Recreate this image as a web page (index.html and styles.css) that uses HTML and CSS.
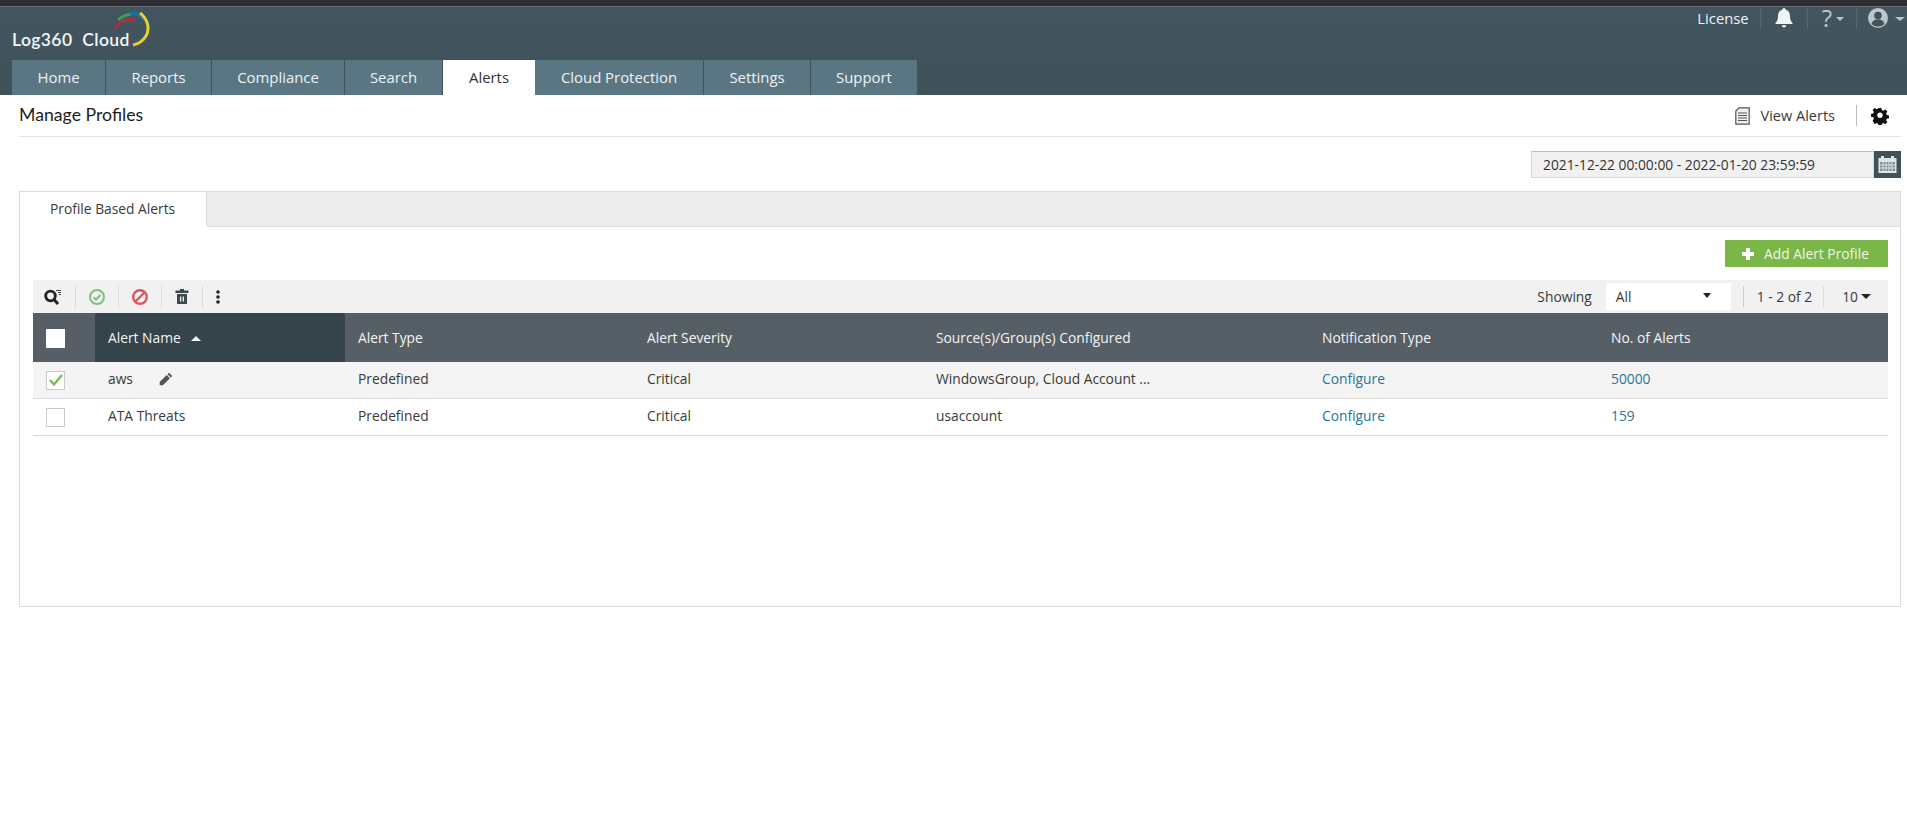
FILE: index.html
```html
<!DOCTYPE html>
<html lang="en">
<head>
<meta charset="utf-8">
<title>Manage Profiles</title>
<link rel="stylesheet" href="styles.css">
</head>
<body>
<div class="topstrip"></div>
<header class="header">
  <div class="brandrow">
    <div class="logo">
      <span class="logo-text">Log360 Cloud</span>
      <svg class="logo-arc" width="40" height="40" viewBox="0 0 40 40" fill="none">
        <path d="M3 17C6 10 14 6 24 8" stroke="#a8323f" stroke-width="3"/>
        <path d="M6 8C9 5 14 3 19 2" stroke="#3f9a55" stroke-width="3"/>
        <path d="M18 2C23 0 28 2 32 8" stroke="#1f6f9c" stroke-width="4"/>
        <path d="M28 1C36 7 38 17 34 24C31 29 26 32 21 33" stroke="#e6cf2e" stroke-width="3"/>
      </svg>
    </div>
    <div class="utils">
      <span class="license">License</span>
      <span class="usep"></span>
      <svg class="u-bell" width="18" height="20" viewBox="0 0 18 20"><path fill="#f1f4f5" d="M9 0a1.6 1.6 0 0 1 1.6 1.7C13.6 2.4 15 5 15 8c0 3.5.9 5.500 2.500 7v1H.5v-1C2.100 13.500 3 11.500 3 8c0-3 1.400-5.600 4.400-6.300A1.600 1.600 0 0 1 9 0zM6.800 17.200h4.400A2.200 2.200 0 0 1 9 19.400a2.200 2.200 0 0 1-2.200-2.200z"/></svg>
      <span class="usep"></span>
      <span class="help">?</span><span class="caret caret-light"></span>
      <span class="usep"></span>
      <svg class="u-user" width="20" height="20" viewBox="0 0 20 20"><circle cx="10" cy="10" r="10" fill="#bcc5c9"/><circle cx="10" cy="7.500" r="3.800" fill="#3f525a"/><path fill="#3f525a" d="M3.500 16c.8-3.200 3.300-4.700 6.500-4.700s5.700 1.500 6.500 4.700A9 9 0 0 1 10 18.500 9 9 0 0 1 3.500 16z"/></svg>
      <span class="caret caret-light caret-end"></span>
    </div>
  </div>
  <nav class="nav">
    <a class="nav-tab t1">Home</a>
    <a class="nav-tab t2">Reports</a>
    <a class="nav-tab t3">Compliance</a>
    <a class="nav-tab t4">Search</a>
    <a class="nav-tab t5 active">Alerts</a>
    <a class="nav-tab t6">Cloud Protection</a>
    <a class="nav-tab t7">Settings</a>
    <a class="nav-tab t8">Support</a>
  </nav>
</header>

<main class="main">
  <div class="titlebar">
    <h1 class="title">Manage Profiles</h1>
    <div class="title-actions">
      <svg width="15" height="18" viewBox="0 0 15 18"><path fill="#f0f0f0" stroke="#555" stroke-width="1.200" d="M4 .8h10.200v16.400H.8V4z"/><path stroke="#555" stroke-width="1.200" d="M3 6h9M3 8.500h9M3 11h9M3 13.500h9"/></svg>
      <span class="view-alerts">View Alerts</span>
      <span class="tsep"></span>
      <svg width="18" height="18" viewBox="0 0 18 18"><path fill="#111" d="M7.400 0h3.200l.5 2.500 1.600.7 2.200-1.400 2.300 2.300-1.400 2.200.7 1.600 2.500.5v3.200l-2.500.5-.7 1.600 1.400 2.200-2.300 2.300-2.200-1.400-1.600.7-.5 2.500H7.400l-.5-2.500-1.600-.7-2.200 1.400L.8 14.200l1.400-2.200-.7-1.600L-1 9.900V6.700l2.500-.5.700-1.600L.8 2.400 3.100.1l2.200 1.400 1.600-.7z" transform="translate(.9 .9) scale(.9)"/><circle cx="9" cy="8.200" r="2.700" fill="#fff"/></svg>
    </div>
  </div>

  <div class="daterow">
    <div class="datebox">2021-12-22 00:00:00 - 2022-01-20 23:59:59</div>
    <div class="calbtn">
      <svg width="19" height="17" viewBox="0 0 19 17"><rect x=".5" y="2" width="18" height="15" fill="#dfe4e6"/><rect x="3" y="0" width="3" height="4" fill="#dfe4e6"/><rect x="13" y="0" width="3" height="4" fill="#dfe4e6"/><rect x="2" y="6" width="15" height="9" fill="#7d8b92"/><path stroke="#dfe4e6" d="M2 9h15M2 12h15M5 6v9M8 6v9M11 6v9M14 6v9"/></svg>
    </div>
  </div>

  <section class="panel">
    <div class="panel-tabs">
      <div class="panel-tab">Profile Based Alerts</div>
      <div class="panel-tabfill"></div>
    </div>
    <div class="panel-body">
      <div class="addrow">
        <button class="addbtn"><span class="plus"></span>Add Alert Profile</button>
      </div>
      <div class="toolbar">
        <div class="tools">
          <svg class="tool" width="18" height="16" viewBox="0 0 18 16"><circle cx="6.500" cy="7" r="4.800" fill="none" stroke="#222" stroke-width="2.800"/><path stroke="#222" stroke-width="3" d="M10 10.500l4 4.500"/><path stroke="#444" d="M12 1.500h5M14 3.500h3M15 5.500h2"/></svg>
          <span class="tsepv"></span>
          <svg class="tool" width="16" height="16" viewBox="0 0 16 16" fill="none"><circle cx="8" cy="8" r="7" stroke="#7fc07f" stroke-width="2"/><path stroke="#7fc07f" stroke-width="2" d="M4.500 8.200l2.500 2.300 4.500-4.500"/></svg>
          <span class="tsepv"></span>
          <svg class="tool" width="16" height="16" viewBox="0 0 16 16" fill="none"><circle cx="8" cy="8" r="6.800" stroke="#e0575b" stroke-width="2.400"/><path stroke="#e0575b" stroke-width="2.400" d="M3.500 12.500l9-9"/></svg>
          <span class="tsepv"></span>
          <svg class="tool" width="14" height="15" viewBox="0 0 14 15"><path fill="#3c4a50" d="M5 0h4v1.500h4.500V4H.5V1.500H5zM2 5h10v10H2zM5 7.500v5h1.300v-5zM7.700 7.500v5H9v-5z" fill-rule="evenodd"/></svg>
          <span class="tsepv"></span>
          <svg class="tool" width="4" height="14" viewBox="0 0 4 14"><circle cx="2" cy="2" r="1.800" fill="#222"/><circle cx="2" cy="7" r="1.800" fill="#222"/><circle cx="2" cy="12" r="1.800" fill="#222"/></svg>
        </div>
        <div class="pager">
          <span class="showing">Showing</span>
          <div class="select"><span>All</span><span class="caret caret-dark"></span></div>
          <span class="psep"></span>
          <span class="count">1 - 2 of 2</span>
          <span class="psep2"></span>
          <span class="perpage">10</span><span class="caret caret-dark caret-wide"></span>
        </div>
      </div>
      <div class="grid grid-head">
        <div class="cell c0"><span class="cb cb-head"></span></div>
        <div class="cell c1 sorted">Alert Name<span class="sort"></span></div>
        <div class="cell">Alert Type</div>
        <div class="cell">Alert Severity</div>
        <div class="cell">Source(s)/Group(s) Configured</div>
        <div class="cell">Notification Type</div>
        <div class="cell">No. of Alerts</div>
      </div>
      <div class="grid grid-row selected">
        <div class="cell c0"><span class="cb"><svg width="16" height="14" viewBox="0 0 16 14" fill="none"><path stroke="#7dbb57" stroke-width="2.400" d="M2 7l4 4.500L14 2"/></svg></span></div>
        <div class="cell c1">aws<svg class="pencil" width="14" height="14" viewBox="0 0 14 14"><path fill="#555" d="M10 .8l3.200 3.200-1.500 1.500-3.200-3.200zM7.700 3.100l3.200 3.200-7 7H.700v-3.200z"/></svg></div>
        <div class="cell">Predefined</div>
        <div class="cell">Critical</div>
        <div class="cell">WindowsGroup, Cloud Account ...</div>
        <div class="cell"><a class="link">Configure</a></div>
        <div class="cell"><a class="link">50000</a></div>
      </div>
      <div class="grid grid-row">
        <div class="cell c0"><span class="cb"></span></div>
        <div class="cell c1">ATA Threats</div>
        <div class="cell">Predefined</div>
        <div class="cell">Critical</div>
        <div class="cell">usaccount</div>
        <div class="cell"><a class="link">Configure</a></div>
        <div class="cell"><a class="link">159</a></div>
      </div>
    </div>
  </section>
</main>
</body>
</html>
```

FILE: styles.css
```css
* { box-sizing: border-box; }
html, body { margin: 0; padding: 0; height: 100%; background: #fff; overflow: hidden; }
body { font-family: "Open Sans", "Liberation Sans", sans-serif; font-size: 13.800px; color: #3a3a3a; }

.topstrip { height: 7px; background: #2e2e33; border-bottom: 1px solid #6a6f73; }

.header { height: 88px; background: linear-gradient(#435660, #3f525a); display: flex; flex-direction: column; justify-content: space-between; }
.brandrow { display: flex; justify-content: space-between; align-items: flex-start; height: 53px; }
.logo { position: relative; width: 160px; height: 53px; }
.logo-text { position: absolute; left: 12px; top: 22px; font-family: "Lato", sans-serif; font-weight: 600; font-size: 17.500px; letter-spacing: .4px; word-spacing: 5px; color: #f4f6f6; white-space: nowrap; }
.logo-arc { position: absolute; left: 112px; top: 5px; }

.utils { display: flex; align-items: center; height: 22px; padding-right: 2px; color: #f1f4f5; }
.license { font-size: 14.800px; margin-right: 11px; margin-top: -1px; }
.usep { width: 1px; height: 22px; background: #55676f; }
.u-bell { margin: 0 14px; }
.help { font-size: 24px; line-height: 22px; color: #bcc5c9; margin-left: 14px; margin-right: 4px; }
.caret { display: inline-block; width: 0; height: 0; border-left: 4px solid transparent; border-right: 4px solid transparent; }
.caret-light { border-top: 4px solid #bcc5c9; margin-right: 12px; margin-top: 2px; }
.caret-end { margin-right: 0; border-left-width: 5px; border-right-width: 5px; }
.u-user { margin-left: 11px; margin-right: 7px; }
.caret-dark { border-top: 5px solid #222; }
.caret-wide { border-left-width: 5px; border-right-width: 5px; }

.nav { display: flex; padding-left: 12px; height: 35px; }
.nav-tab { display: flex; align-items: center; justify-content: center; height: 35px; padding-bottom: 2px; background: #5a7683; color: #eef2f3; font-size: 14.900px; border-right: 1px solid #3f525a; }
.nav-tab.active { background: #fff; color: #333; border-right: 0; }
.t1 { width: 94px; }
.t2 { width: 106px; }
.t3 { width: 133px; }
.t4 { width: 98px; }
.t5 { width: 92px; }
.t6 { width: 169px; }
.t7 { width: 107px; }
.t8 { width: 106px; border-right: 0; }

.main { padding: 0 6px 0 19px; }
.titlebar { height: 42px; display: flex; justify-content: space-between; align-items: center; border-bottom: 1px solid #e4e4e4; }
.title { margin: 0 0 2px; font-family: "Lato", sans-serif; font-weight: 400; font-size: 17.700px; color: #1d1d1d; }
.title-actions { display: flex; align-items: center; padding-right: 12px; }
.view-alerts { font-size: 14.500px; color: #3a3a3a; margin-left: 11px; }
.tsep { width: 1px; height: 21px; background: #bbb; margin: 0 14px 0 21px; }

.daterow { display: flex; justify-content: flex-end; margin-top: 14px; height: 27px; }
.datebox { width: 343px; height: 27px; background: #f1f1f1; border: 1px solid #d8d8d8; border-top-color: #bdbdbd; padding-left: 11px; font-size: 13.800px; line-height: 25px; color: #333; }
.calbtn { width: 27px; height: 27px; background: #3f525a; display: flex; align-items: center; justify-content: center; }

.panel { margin-top: 13px; height: 416px; border: 1px solid #dcdcdc; }
.panel-tabs { display: flex; height: 35px; }
.panel-tab { width: 186px; padding-left: 30px; font-size: 13.800px; line-height: 33px; }
.panel-tabfill { flex: 1; background: #ededee; border-left: 1px solid #dcdcdc; border-bottom: 1px solid #dcdcdc; border-bottom-left-radius: 3px; }
.panel-body { padding: 0 12px 0 13px; }

.addrow { display: flex; justify-content: flex-end; padding-top: 13px; height: 53px; }
.addbtn { width: 163px; height: 27px; display: flex; align-items: center; justify-content: center; background: #7ab648; color: #eef6e6; border: 0; padding: 0 2px 0 0; font-family: inherit; font-size: 13.800px; }
.plus { width: 12px; height: 12px; margin-right: 10px; background: linear-gradient(#fff, #fff) center / 12px 4px no-repeat, linear-gradient(#fff, #fff) center / 4px 12px no-repeat; }

.toolbar { height: 33px; background: #f1f1f1; display: flex; justify-content: space-between; align-items: center; }
.tools { display: flex; align-items: center; padding-left: 11px; }
.tsepv { width: 1px; height: 22px; background: #dcdcdc; margin: 0 13px; }
.pager { display: flex; align-items: center; padding-right: 17px; }
.select { width: 125px; height: 27px; margin-left: 14px; background: #fff; display: flex; align-items: center; justify-content: space-between; padding: 0 20px 0 10px; }
.select .caret-dark { margin-top: -3px; }
.psep { width: 1px; height: 21px; background: #ccc; margin: 0 13px 0 12px; }
.psep2 { width: 1px; height: 21px; background: #ddd; margin: 0 18px 0 11px; }
.perpage { margin-right: 3px; }

.grid { display: grid; grid-template-columns: 62px 250px 289px 289px 386px 289px 1fr; align-items: center; }
.cell { padding-left: 13px; white-space: nowrap; }
.c0 { display: flex; align-items: center; }
.grid-head { height: 49px; background: #565f66; color: #f4f4f4; }
.grid-head .cell { line-height: 49px; }
.grid-head .c0 { height: 49px; padding-top: 2px; }
.sorted { background: #35434b; height: 49px; border-radius: 3px 3px 0 0; }
.sort { display: inline-block; width: 0; height: 0; margin-left: 10px; vertical-align: 2px; border-left: 5px solid transparent; border-right: 5px solid transparent; border-bottom: 5px solid #f4f4f4; }
.grid-row { height: 37px; border-bottom: 1px solid #dcdcdc; }
.grid-row .cell { padding-bottom: 4px; }
.grid-row .c0 { padding-bottom: 0; }
.selected { background: #f4f4f4; }
.cb { width: 19px; height: 19px; background: #fff; border: 1px solid #c9c9c9; display: flex; align-items: center; justify-content: center; }
.cb-head { border: 0; }
.pencil { margin-left: 26px; vertical-align: -2px; }
.link { color: #2a7497; }
```
